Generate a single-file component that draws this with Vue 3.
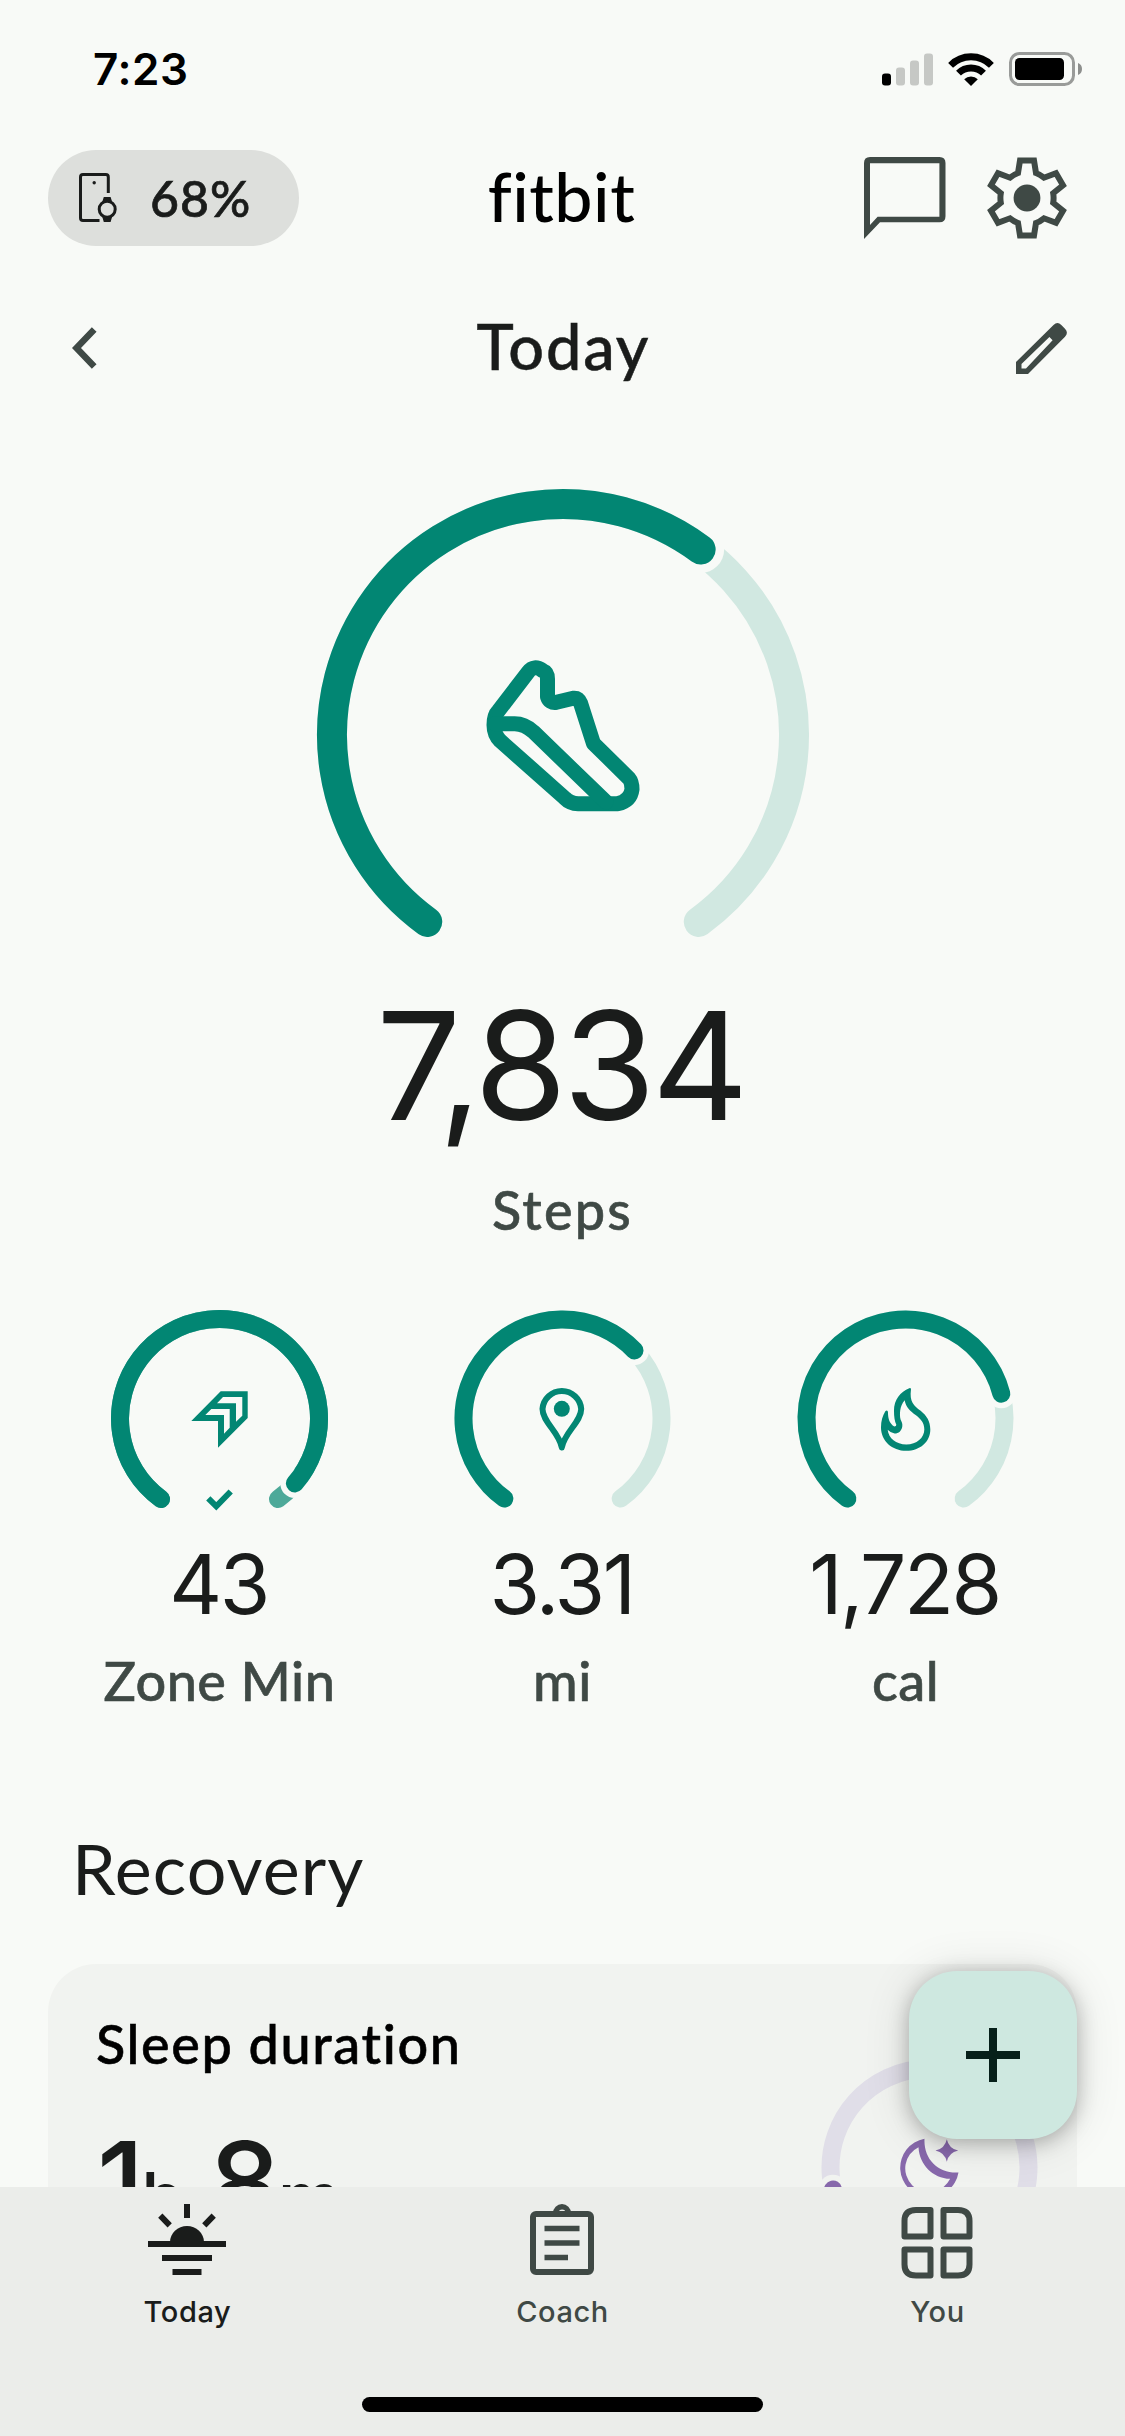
<script setup>
import { ref } from 'vue'

// Every gauge runs from -144° to +144°, measured from the top
const SWEEP = 144

const point = (c, r, deg) => {
  const rad = (deg * Math.PI) / 180
  return [c + r * Math.sin(rad), c - r * Math.cos(rad)]
}

const arc = (c, r, from, to) => {
  const [x1, y1] = point(c, r, from)
  const [x2, y2] = point(c, r, to)
  const large = to - from > 180 ? 1 : 0
  return `M${x1.toFixed(2)} ${y1.toFixed(2)}A${r} ${r} 0 ${large} 1 ${x2.toFixed(2)} ${y2.toFixed(2)}`
}

const gauge = (c, r, progress) => {
  const end = -SWEEP + progress * SWEEP * 2
  return {
    track: arc(c, r, -SWEEP, SWEEP),
    value: arc(c, r, -SWEEP, end),
    end: point(c, r, end)
  }
}

const steps = gauge(246, 231, 0.627)
const sleep = gauge(108.5, 99, 0.143)

const stats = ref([
  { id: 'zone', value: '43', label: 'Zone Min', done: true, gauge: gauge(108.5, 99.5, 0.954) },
  { id: 'distance', value: '3.31', label: 'mi', done: false, gauge: gauge(108.5, 99, 0.662) },
  { id: 'calories', value: '1,728', label: 'cal', done: false, gauge: gauge(108.5, 99, 0.762) }
])

const tabs = ['Today', 'Coach', 'You']
const activeTab = ref('Today')
</script>

<template>
  <div class="screen">
    <div class="status-bar">
      <span class="clock">7:23</span>
      <div class="status-icons">
        <svg class="signal" width="51" height="33" viewBox="0 0 51 33">
          <rect x="0" y="20.5" width="9" height="12" rx="3" fill="#000" />
          <rect x="14" y="14.5" width="9" height="18" rx="3" fill="#c6c8c5" />
          <rect x="28" y="7.5" width="9" height="25" rx="3" fill="#c6c8c5" />
          <rect x="42" y="0.5" width="9" height="32" rx="3" fill="#c6c8c5" />
        </svg>
        <svg class="wifi" width="46" height="33" viewBox="0 0 46 33">
          <path d="M2.6 12.3A28.6 28.6 0 0 1 43.4 12.3M10.5 20.2A17.6 17.6 0 0 1 35.5 20.2" fill="none" stroke="#000" stroke-width="6.8" />
          <path d="M23 33L16.2 26.2A9.6 9.6 0 0 1 29.8 26.2Z" fill="#000" />
        </svg>
        <svg width="74" height="34" viewBox="0 0 74 34">
          <rect x="1.5" y="1.5" width="63" height="31" rx="9" fill="none" stroke="#999b99" stroke-width="3" />
          <rect x="6" y="6" width="49" height="22" rx="4.5" fill="#000" />
          <path d="M69 11Q73 12.5 73 17T69 23Z" fill="#8d8f8d" />
        </svg>
      </div>
    </div>

    <header class="top-bar">
      <button class="device-pill">
        <svg width="38" height="50" viewBox="0 0 38 50" fill="none" stroke="#1a1c1b" stroke-width="3">
          <path d="M29.3 20V4Q29.3 1.5 26.8 1.5H4Q1.5 1.5 1.5 4V45Q1.5 47.5 4 47.5H20.5" />
          <circle cx="15.2" cy="9.7" r="1.7" fill="#1a1c1b" stroke="none" />
          <circle cx="28.2" cy="36.2" r="8" />
          <path d="M24.8 24h6.8l1.6 5h-10zM24.8 49h6.8l1.6-5.5h-10z" fill="#1a1c1b" stroke="none" />
        </svg>
        <span>68%</span>
      </button>
      <h1 class="brand">fitbit</h1>
      <div class="actions">
        <svg width="82" height="82" viewBox="0 0 82 82">
          <path fill="#3f4945" fill-rule="evenodd" d="M0 82V6Q0 0 6 0H75.5Q81.5 0 81.5 6V59.3Q81.5 65.3 75.5 65.3H16ZM6 68L13.6 59.7H75.4V6.3H6Z" />
        </svg>
        <svg width="82" height="82" viewBox="-41 -41 82 82">
          <path
            fill="none" stroke="#3f4945" stroke-width="6"
            d="M-9 -25L-7 -37.5H7L9 -25Q13 -23.5 17 -20.3L29 -24.8L36 -12.7L26.2 -4.8Q27 0 26.2 4.8L36 12.7L29 24.8L17 20.3Q13 23.5 9 25L7 37.5H-7L-9 25Q-13 23.5 -17 20.3L-29 24.8L-36 12.7L-26.2 4.8Q-27 0 -26.2 -4.8L-36 -12.7L-29 -24.8L-17 -20.3Q-13 -23.5 -9 -25Z"
          />
          <circle r="13.4" fill="#3f4945" />
        </svg>
      </div>
    </header>

    <div class="day-bar">
      <svg width="27" height="44" viewBox="0 0 27 44">
        <path d="M23.2 3.5L5.5 22L23.2 40.5" fill="none" stroke="#3f4945" stroke-width="6.5" />
      </svg>
      <h2>Today</h2>
      <svg width="51" height="51" viewBox="0 0 51 51">
        <path fill="#3f4945" fill-rule="evenodd" d="M0 51V39L37.5 2Q41.5 -1.8 45.3 2L49 5.8Q52.8 9.7 49 13.7L12 51ZM5.5 45.5H10L36.6 17.3L33.4 14L5.5 41Z" />
      </svg>
    </div>

    <main class="content">
      <section class="hero">
        <svg class="hero-ring" width="492" height="456" viewBox="0 0 492 456" fill="none" stroke-linecap="round">
          <path :d="steps.track" stroke="#d1e8e1" stroke-width="30" />
          <circle :cx="steps.end[0]" :cy="steps.end[1]" r="23.5" fill="#f8faf7" />
          <path :d="steps.value" stroke="#028673" stroke-width="30" />
          <g stroke="#028673" stroke-width="15" stroke-linejoin="round">
            <path d="M211.2 183Q217 175.5 225.5 181.5Q230.5 183.3 230.5 190V207.7Q232.5 214.3 239.5 213.3L256.2 209.3Q261.5 208.8 263.6 214.3L276.4 254.3L311.9 289.3Q315 293 315 300.3Q313.5 312 300.8 314.7H261.2Q253 314.5 247.7 309L183.1 251.7Q177 245.5 177 236T181.1 222.3Z" />
            <path d="M178 234.7H197.7Q207.5 234.7 216.3 242.7L289 313" />
          </g>
        </svg>
        <div class="hero-value">7,834</div>
        <div class="hero-label">Steps</div>
      </section>

      <section class="stats">
        <div v-for="s in stats" :key="s.id" class="stat">
          <svg class="stat-ring" width="217" height="208" viewBox="0 0 217 208" fill="none" stroke-linecap="round">
            <path :d="s.gauge.track" :stroke="s.done ? '#4da999' : '#d1e8e1'" stroke-width="18" />
            <circle :cx="s.gauge.end[0]" :cy="s.gauge.end[1]" r="14.6" fill="#f8faf7" />
            <path :d="s.gauge.value" stroke="#028673" stroke-width="18" />

            <g v-if="s.id === 'zone'">
              <path
                fill="#028673" fill-rule="evenodd"
                d="M80.3 111L109.7 81.3H136.7V108L107 137.7V111ZM112 87H131.3V105.7L125 111.7V93.3H106ZM100.3 99H118.7V117.7L113 123.7V105H94.3Z"
              />
              <path d="M97.3 188.3L105.3 196.3L119.7 181.5" stroke="#028673" stroke-width="6" stroke-linecap="butt" />
            </g>
            <g v-else-if="s.id === 'distance'">
              <path d="M88.5 99A19.4 19.4 0 0 1 127.2 99C127.2 112 110.5 122 107.8 137.5C105 122 88.5 112 88.5 99Z" stroke="#028673" stroke-width="6" stroke-linejoin="round" />
              <circle cx="107.8" cy="98.8" r="8" fill="#028673" />
            </g>
            <g v-else transform="translate(-27 -19.5) scale(0.3333)">
              <path
                fill="#028673" fill-rule="evenodd"
                d="M423 296C418 335 431 344 452 361C470 376 481 392 481 417C481 454 450 481 409 481C366 481 333 451 333 411C333 390 338 375 346 362C350 358 354 360 354 366C354 385 359 400 373 408Q379 408 379 403C374 392 372 379 372 360C372 328 391 303 418 293Q423 292 423 296ZM404 329C389 346 388 372 392 388C395 395 398 399 397 407C395 421 386 429 374 429Q361 427 353 418C356 444 378 462 409 462C440 462 463 442 463 417C463 395 451 385 438 374C420 361 408 350 404 329Z"
              />
            </g>
          </svg>
          <div class="stat-value">{{ s.value }}</div>
          <div class="stat-label">{{ s.label }}</div>
        </div>
      </section>

      <h3 class="section-title">Recovery</h3>

      <section class="card">
        <div class="card-text">
          <div class="card-title">Sleep duration</div>
          <div class="card-value">1<small>h</small> 8<small>m</small></div>
        </div>
        <svg class="card-ring" width="217" height="217" viewBox="0 0 217 217" fill="none" stroke-linecap="round">
          <path :d="sleep.track" stroke="#e0dee8" stroke-width="18" />
          <circle :cx="sleep.end[0]" :cy="sleep.end[1]" r="14.6" fill="#f1f3f0" />
          <path :d="sleep.value" stroke="#8768ab" stroke-width="18" />
          <g transform="translate(-41.5 -117.5) scale(0.3333)" fill="#8768ab">
            <path fill-rule="evenodd" d="M435 592C432 655 478 697 537 693A88 88 0 1 1 435 592ZM417 617A71 71 0 1 0 512 712C460 710 420 670 417 617Z" />
            <path d="M502 593Q508 621 536 627Q508 633 502 661Q496 633 468 627Q496 621 502 593Z" />
          </g>
        </svg>
      </section>
    </main>

    <button class="fab">
      <svg width="54" height="54" viewBox="0 0 54 54">
        <path d="M27 0V54M0 27H54" stroke="#06201a" stroke-width="8" />
      </svg>
    </button>

    <nav class="tab-bar">
      <div class="tabs">
        <div v-for="tab in tabs" :key="tab" class="tab" :class="{ active: tab === activeTab }">
          <svg v-if="tab === 'Today'" width="78" height="78" viewBox="0 0 78 78" fill="none" stroke="currentColor" stroke-width="6">
            <path d="M39 3V17M12.3 14.7L21.7 24.3M65.7 14.7L56.3 24.3M0 43H78M14 57H64M24.5 71H53.5" />
            <path d="M22 41A17 16 0 0 1 56 41Z" fill="currentColor" stroke="none" />
          </svg>
          <svg v-else-if="tab === 'Coach'" width="78" height="78" viewBox="0 0 78 78" fill="none" stroke="currentColor" stroke-width="6">
            <rect x="10" y="13" width="58" height="58" rx="3" />
            <path d="M21.5 27.5H56.5M21.5 42H56.5M21.5 56.5H45" stroke-width="5.4" />
            <path fill="currentColor" fill-rule="evenodd" stroke="none" d="M30 12A9 9 0 0 1 48 12V15H30ZM35.8 11.7a3.3 3.3 0 1 0 6.6 0a3.3 3.3 0 1 0-6.6 0Z" />
          </svg>
          <svg v-else width="78" height="78" viewBox="0 0 78 78" fill="none" stroke="currentColor" stroke-width="6" stroke-linejoin="round">
            <path d="M32.5 9H18Q6.5 9 6.5 20V35.5H32.5ZM45.5 9H60Q71.5 9 71.5 20V35.5H45.5ZM32.5 74.5H18Q6.5 74.5 6.5 63.5V48.5H32.5ZM45.5 74.5H60Q71.5 74.5 71.5 63.5V48.5H45.5Z" />
          </svg>
          <span>{{ tab }}</span>
        </div>
      </div>
      <div class="home-indicator"></div>
    </nav>
  </div>
</template>

<style>
body { margin: 0; background: #f8faf7; }
</style>

<style scoped>
.screen {
  position: relative; width: 1125px; height: 2436px; overflow: hidden;
  display: flex; flex-direction: column;
  background: #f8faf7; color: #1a1c1b;
  font-family: Lato, "Liberation Sans", sans-serif; font-variant-ligatures: none;
}
h1, h2, h3 { margin: 0; font-weight: 500; }
button { border: none; padding: 0; font: inherit; color: inherit; cursor: pointer; }
svg { display: block; flex: none; }

/* Status bar */
.status-bar {
  height: 138px; padding: 0 42px 0 93px; box-sizing: border-box; flex: none;
  display: flex; justify-content: space-between; align-items: center;
}
.clock { font: 600 44px/60px Inter, sans-serif; color: #000; letter-spacing: 0.6px; }
.status-icons { display: flex; align-items: center; }
.wifi { margin: 0 15px; }

/* Header */
.top-bar {
  height: 96px; margin-top: 12px; padding: 0 57px 0 48px; flex: none;
  display: grid; grid-template-columns: 1fr auto 1fr; align-items: center;
}
.device-pill {
  width: 251px; height: 96px; padding-left: 31px; box-sizing: border-box; border-radius: 48px;
  display: flex; align-items: center; gap: 33px; background: #dddfdc;
  font-size: 50px; font-weight: 500; letter-spacing: 1px; -webkit-text-stroke: 0.7px;
}
.brand { font-size: 68px; line-height: 92px; padding: 0 0 4px 7px; color: #000; letter-spacing: 0.5px; }
.actions { display: flex; justify-content: flex-end; gap: 40px; }

.day-bar {
  height: 96px; margin-top: 54px; padding: 0 58px 0 71px; flex: none;
  display: grid; grid-template-columns: 1fr auto 1fr; align-items: center;
}
.day-bar h2 { font-size: 63px; line-height: 90px; padding: 0 11px 4px 0; letter-spacing: 1.9px; -webkit-text-stroke: 0.5px; }
.day-bar svg:last-child { justify-self: end; }

/* Content */
.content { flex: 1; min-height: 0; overflow: hidden; padding: 93px 48px 0; }
.hero { display: flex; flex-direction: column; align-items: center; }
.hero-ring, .stat-ring { overflow: visible; }
.hero-value { margin-top: 46px; padding-right: 4px; font: 400 150px/150px Inter, sans-serif; letter-spacing: -4px; }
.hero-label { margin-top: 39px; font-size: 54px; line-height: 60px; font-weight: 500; color: #3f4945; letter-spacing: 2.2px; -webkit-text-stroke: 0.6px; }

.stats { margin-top: 70px; display: grid; grid-template-columns: repeat(3, 1fr); }
.stat { display: flex; flex-direction: column; align-items: center; }
.stat-value { margin-top: 17px; padding-right: 2px; font: 400 82px/100px Inter, sans-serif; letter-spacing: -2.5px; }
.stat-label { margin-top: 16px; font-size: 54px; line-height: 60px; font-weight: 500; color: #3f4945; letter-spacing: 0.5px; -webkit-text-stroke: 0.6px; }

.section-title { margin: 117px 0 56px 24px; font-size: 70px; line-height: 80px; font-weight: 400; letter-spacing: 1.1px; }

.card {
  height: 480px; padding: 50px 39px 0 48px; border-radius: 48px; background: #f1f3f0;
  display: flex; justify-content: space-between; align-items: flex-start;
}
.card-title { font-size: 54px; line-height: 60px; font-weight: 500; color: #000; letter-spacing: 1.6px; -webkit-text-stroke: 0.6px; }
.card-value { margin-top: 49px; padding-left: 1px; font: 500 114px/120px Inter, sans-serif; letter-spacing: -3px; white-space: nowrap; }
.card-value small { font-size: 72px; }
.card-ring { margin-top: 45px; }

/* Floating add button, over the card */
.fab {
  position: absolute; right: 48px; bottom: 297px; width: 168px; height: 168px; border-radius: 48px;
  display: flex; align-items: center; justify-content: center; background: #cee8e0;
  box-shadow: 0 4px 20px rgba(0, 0, 0, 0.26), 0 2px 48px rgba(0, 0, 0, 0.12);
}

/* Bottom navigation */
.tab-bar {
  position: relative; height: 249px; flex: none; background: #ebedea;
  display: flex; flex-direction: column; align-items: center; justify-content: space-between;
}
.tabs { width: 100%; display: grid; grid-template-columns: repeat(3, 1fr); padding-top: 14px; }
.tab { display: flex; flex-direction: column; align-items: center; color: #3f4945; }
.tab svg { margin-right: 1px; }
.tab span { margin-top: 13px; font: 500 29px/40px Inter, sans-serif; letter-spacing: 0.6px; }
.tab.active { color: #1a1c1b; }
.home-indicator { width: 401px; height: 15px; margin-bottom: 24px; border-radius: 8px; background: #000; }
</style>
